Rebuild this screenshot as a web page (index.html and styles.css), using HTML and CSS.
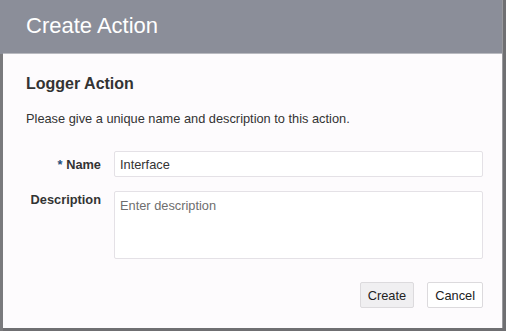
FILE: index.html
```html
<!DOCTYPE html>
<html lang="en">
<head>
    <meta charset="UTF-8">
    <title>Create Action</title>
    <link rel="stylesheet" href="styles.css">
</head>
<body>
    <div class="backdrop"></div>
    <div class="dialog">
        <div class="dialog-header">
            <h1>Create Action</h1>
        </div>
        <div class="dialog-body">
            <h2>Logger Action</h2>
            <p class="intro">Please give a unique name and description to this action.</p>
            <form class="form">
                <div class="form-row">
                    <label for="actionName"><span class="required">*</span> Name</label>
                    <input type="text" id="actionName" value="Interface">
                </div>
                <div class="form-row">
                    <label for="actionDesc" class="top-label">Description</label>
                    <textarea id="actionDesc" placeholder="Enter description"></textarea>
                </div>
                <div class="buttons">
                    <button type="button" class="btn btn-primary">Create</button>
                    <button type="button" class="btn">Cancel</button>
                </div>
            </form>
        </div>
    </div>
</body>
</html>
```

FILE: styles.css
```css
* {
    margin: 0;
    padding: 0;
    box-sizing: border-box;
}

body {
    width: 506px;
    height: 331px;
    overflow: hidden;
    background: #6f6f72;
    font-family: "Liberation Sans", Arial, sans-serif;
    color: #333;
    display: flex;
}

.backdrop {
    width: 3px;
    background: linear-gradient(to bottom, #8b8e99 0, #8b8e99 54px, #7a7a7d 54px);
}

.dialog {
    width: 500px;
    height: 328px;
    background: #fdfbfd;
    border-right: 1px solid #9a9a9e;
    display: flex;
    flex-direction: column;
}

.dialog-header {
    height: 54px;
    background: #8b8e99;
    border-bottom: 1px solid #b9bac0;
    padding: 13px 0 0 23px;
}

.dialog-header h1 {
    font-size: 22px;
    font-weight: normal;
    color: #fff;
}

.dialog-body {
    padding: 21px 20px 0 23px;
}

h2 {
    font-size: 16px;
    font-weight: bold;
    color: #333;
}

.intro {
    font-size: 12.8px;
    margin-top: 18px;
}

.form {
    margin-top: 25px;
}

.form-row {
    display: grid;
    grid-template-columns: 75px 369px;
    column-gap: 13px;
    margin-bottom: 14px;
}

.form-row label {
    text-align: right;
    font-size: 12.8px;
    font-weight: bold;
    color: #333;
    padding-top: 6px;
}

.form-row .top-label {
    padding-top: 1px;
}

.required {
    color: #1f4e7a;
}

.form-row input,
.form-row textarea {
    border: 1px solid #e4e1e6;
    border-radius: 2px;
    background: #fff;
    font-family: "Liberation Sans", Arial, sans-serif;
    font-size: 12.8px;
    color: #333;
    padding: 5px 5px;
}

.form-row input {
    height: 26px;
}

.form-row textarea {
    height: 68px;
    resize: none;
    padding-top: 6px;
}

.form-row textarea::placeholder {
    color: #6e6e6e;
}

.buttons {
    display: flex;
    justify-content: flex-end;
    gap: 13px;
    width: 457px;
    margin-top: 23px;
}

.btn {
    height: 26px;
    padding: 0 7px;
    font-family: "Liberation Sans", Arial, sans-serif;
    font-size: 12.8px;
    color: #222;
    background: #fff;
    border: 1px solid #dcdadd;
    border-radius: 2px;
}

.btn-primary {
    background: #f0eff1;
}
```
